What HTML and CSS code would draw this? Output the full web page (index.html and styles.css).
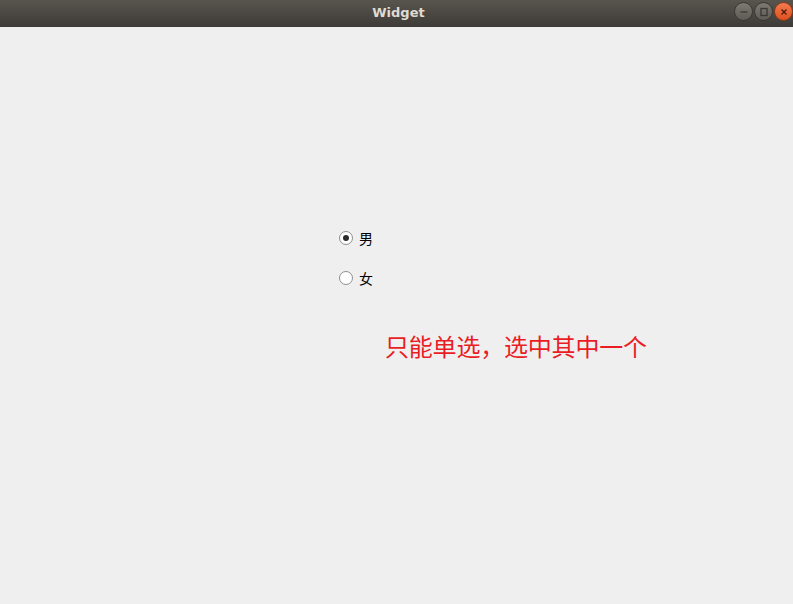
FILE: index.html
```html
<!DOCTYPE html>
<html lang="zh">
<head>
  <meta charset="UTF-8" />
  <title>Widget</title>
  <link rel="stylesheet" href="styles.css">
</head>
<body>
  <div class="window">
    <header class="titlebar">
      <div class="title">Widget</div>
      <div class="controls">
        <span class="ctl ctl-min">
          <svg viewBox="0 0 16 16"><path d="M4.5 8h7" /></svg>
        </span>
        <span class="ctl ctl-max">
          <svg viewBox="0 0 16 16"><rect x="5" y="4.5" width="6" height="7" /></svg>
        </span>
        <span class="ctl ctl-close">
          <svg viewBox="0 0 16 16"><path d="M5.5 5.5l5 5M10.5 5.5l-5 5" /></svg>
        </span>
      </div>
    </header>

    <main class="content">
      <div class="options">
        <label class="radio">
          <input type="radio" name="sex" checked>
          <span class="dot"></span>
          <span class="label">男</span>
        </label>
        <label class="radio">
          <input type="radio" name="sex">
          <span class="dot"></span>
          <span class="label">女</span>
        </label>
      </div>
      <div class="note">只能单选，选中其中一个</div>
    </main>
  </div>
</body>
</html>
```

FILE: styles.css
```css
* { box-sizing: border-box; margin: 0; padding: 0; }

body {
  font-family: 'Noto Sans', 'Noto Sans CJK SC', sans-serif;
  background-color: #efefef;
  width: 793px;
  height: 604px;
  overflow: hidden;
}

.window {
  display: flex;
  flex-direction: column;
  height: 100%;
}

.titlebar {
  height: 27px;
  background: linear-gradient(#58554f, #3d3b37);
  display: flex;
  align-items: center;
  justify-content: center;
  position: relative;
}

.title {
  color: #dfdbd2;
  font-family: 'DejaVu Sans', sans-serif;
  font-weight: bold;
  font-size: 13px;
  margin: -3px 0 0 4px;
}

.controls {
  position: absolute;
  right: 0;
  top: 2px;
  display: flex;
  gap: 1px;
}

.ctl {
  width: 19px;
  height: 19px;
  border-radius: 50%;
  background: linear-gradient(#7d7a74, #5e5b56);
  border: 1px solid #3a3834;
  display: flex;
  align-items: center;
  justify-content: center;
}

.ctl svg {
  width: 16px;
  height: 16px;
  fill: none;
  stroke: #3a3834;
  stroke-width: 1.3;
}

.ctl-close {
  background: linear-gradient(#f37a4f, #e0501f);
  border-color: #8a3a1a;
}

.ctl-close svg { stroke: #4a1c0c; }

.content {
  flex: 1;
  padding: 200px 0 0 339px;
}

.options {
  display: flex;
  flex-direction: column;
  gap: 18px;
}

.radio {
  display: flex;
  align-items: center;
  gap: 6px;
  height: 22px;
  font-size: 14px;
  color: #000;
}

.radio input { display: none; }

.dot {
  width: 14px;
  height: 14px;
  border-radius: 50%;
  border: 1px solid #8f8f8f;
  background: #fff;
  display: flex;
  align-items: center;
  justify-content: center;
}

.radio input:checked + .dot::after {
  content: "";
  width: 6px;
  height: 6px;
  border-radius: 50%;
  background: #2b2b2b;
}

.note {
  margin: 43px 0 0 46px;
  color: #ea1c24;
  font-size: 24px;
  line-height: 30px;
  letter-spacing: -0.2px;
}
```
